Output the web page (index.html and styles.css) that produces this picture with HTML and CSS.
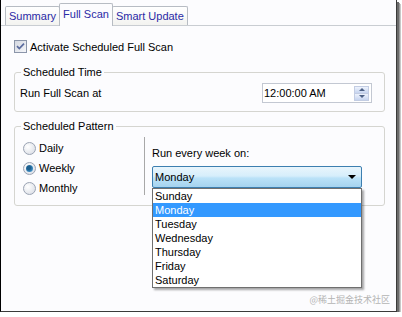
FILE: index.html
```html
<!DOCTYPE html>
<html lang="en">
<head>
    <meta charset="UTF-8">
    <meta name="viewport" content="width=device-width, initial-scale=1.0">
    <title>Full Scan</title>
    <link rel="stylesheet" href="styles.css">
</head>
<body>
    <div class="window">
        <div class="tabs">
            <span class="tab">Summary</span>
            <span class="tab active">Full Scan</span>
            <span class="tab">Smart Update</span>
        </div>

        <div class="panel">
            <div class="check-row">
                <svg class="checkbox" width="13" height="13" viewBox="0 0 13 13">
                    <defs>
                        <linearGradient id="cbfill" x1="0" y1="0" x2="1" y2="1">
                            <stop offset="0" stop-color="#d3d7e0"/>
                            <stop offset="1" stop-color="#f6f7fa"/>
                        </linearGradient>
                    </defs>
                    <rect x="0.5" y="0.5" width="12" height="12" fill="url(#cbfill)" stroke="#8b95a9"/>
                    <path d="M3 6.2 L5.3 8.6 L10 3.6" fill="none" stroke="#5a6b9e" stroke-width="1.7"/>
                </svg>
                <span>Activate Scheduled Full Scan</span>
            </div>

            <fieldset class="group time-group">
                <legend>Scheduled Time</legend>
                <div class="time-row">
                    <span>Run Full Scan at</span>
                    <div class="time-box">
                        <span class="time-value">12:00:00 AM</span>
                        <div class="spin">
                            <span class="spin-btn"><i class="tri-up"></i></span>
                            <span class="spin-btn"><i class="tri-down"></i></span>
                        </div>
                    </div>
                </div>
            </fieldset>

            <fieldset class="group pattern-group">
                <legend>Scheduled Pattern</legend>
                <div class="pattern-body">
                    <div class="radios">
                        <div class="radio-row"><span class="radio"></span>Daily</div>
                        <div class="radio-row"><span class="radio checked"></span>Weekly</div>
                        <div class="radio-row"><span class="radio"></span>Monthly</div>
                    </div>
                    <div class="separator"></div>
                    <div class="week">
                        <div class="week-label">Run every week on:</div>
                        <div class="combo">
                            <div class="combo-box">
                                <span>Monday</span>
                                <i class="combo-arrow"></i>
                            </div>
                            <ul class="combo-list">
                                <li>Sunday</li>
                                <li class="selected">Monday</li>
                                <li>Tuesday</li>
                                <li>Wednesday</li>
                                <li>Thursday</li>
                                <li>Friday</li>
                                <li>Saturday</li>
                            </ul>
                        </div>
                    </div>
                </div>
            </fieldset>
        </div>

        <div class="watermark">@稀土掘金技术社区</div>
    </div>
</body>
</html>
```

FILE: styles.css
```css
body {
    margin: 0;
    background: #ffffff;
    font-family: "Liberation Sans", Arial, sans-serif;
    font-size: 11px;
    color: #000;
}
.window {
    position: relative;
    width: 395px;
    height: 311px;
    background: #fcfcfe;
    border-left: 1px solid #000;
    border-right: 1px solid #3a3a3a;
    border-bottom: 1px solid #3a3a3a;
    box-shadow: 2px 2px 0 #6a6a6a, 3px 3px 0 #9a9a9a, 4px 4px 0 #c8c8c8;
}
.tabs {
    display: flex;
    align-items: flex-end;
    height: 25px;
    padding-left: 4px;
    border-bottom: 1px solid #c9cdd2;
}
.tab {
    box-sizing: border-box;
    height: 19px;
    line-height: 18px;
    padding: 0 3px;
    border: 1px solid #b7bcc3;
    border-bottom: none;
    border-radius: 2px 2px 0 0;
    background: linear-gradient(#ffffff, #f3f3f0);
    color: #2a2aa6;
    margin-right: -1px;
}
.tab.active {
    height: 23px;
    line-height: 20px;
    margin-bottom: -1px;
    background: #fcfcfe;
    position: relative;
}
.panel {
    padding-left: 13px;
}
.check-row {
    display: flex;
    align-items: center;
    gap: 3px;
    height: 13px;
    margin-top: 14px;
}
.checkbox {
    display: block;
}
.group {
    box-sizing: border-box;
    width: 371px;
    margin: 0;
    padding: 0;
    border: 1px solid #d5d5d0;
    border-radius: 3px;
}
.group legend {
    margin-left: 6px;
    padding: 0 2px;
    line-height: 13px;
}
.time-group {
    margin-top: 13px;
}
.time-row {
    display: flex;
    align-items: center;
    justify-content: space-between;
    padding: 4px 12px 8px 5px;
}
.time-box {
    box-sizing: border-box;
    display: flex;
    align-items: center;
    justify-content: space-between;
    width: 110px;
    height: 20px;
    border: 1px solid #c3c8d2;
    background: #fff;
    padding: 0 2px 0 1px;
}
.spin {
    display: flex;
    flex-direction: column;
    width: 15px;
}
.spin-btn {
    box-sizing: border-box;
    display: flex;
    align-items: center;
    justify-content: center;
    height: 8px;
    border: 1px solid #c3cde3;
    background: linear-gradient(#eef3fd, #c6d4ef);
}
.spin-btn + .spin-btn {
    margin-top: -1px;
}
.tri-up, .tri-down {
    width: 0;
    height: 0;
    border-left: 3px solid transparent;
    border-right: 3px solid transparent;
}
.tri-up {
    border-bottom: 3px solid #4d6185;
}
.tri-down {
    border-top: 3px solid #4d6185;
}
.pattern-group {
    margin-top: 8px;
}
.pattern-body {
    display: flex;
    padding: 4px 0 7px 0;
}
.radios {
    width: 121px;
    padding: 1px 0 0 8px;
}
.radio-row {
    display: flex;
    align-items: center;
    gap: 3px;
    height: 20px;
}
.radio {
    box-sizing: border-box;
    width: 13px;
    height: 13px;
    border-radius: 50%;
    border: 1px solid #9aa3b3;
    background: radial-gradient(circle at 35% 35%, #ffffff, #d5d9e2);
    position: relative;
}
.radio.checked::after {
    content: "";
    position: absolute;
    left: 2px;
    top: 2px;
    width: 7px;
    height: 7px;
    border-radius: 50%;
    background: radial-gradient(circle at 40% 40%, #1d5f8e 30%, #3f8fc6 70%, #8cc6ea);
}
.separator {
    width: 1px;
    height: 58px;
    background: #a8a8a8;
}
.week {
    padding: 10px 0 0 7px;
}
.week-label {
    line-height: 13px;
}
.combo {
    position: relative;
    margin-top: 6px;
    width: 210px;
}
.combo-box {
    box-sizing: border-box;
    display: flex;
    align-items: center;
    justify-content: space-between;
    height: 22px;
    padding: 0 5px 0 2px;
    border: 1px solid #3d7fb0;
    border-radius: 2px;
    background: linear-gradient(#e9f5fc 0%, #d6eefb 45%, #bbe2f8 55%, #a5d3ef 100%);
}
.combo-arrow {
    width: 0;
    height: 0;
    border-left: 4px solid transparent;
    border-right: 4px solid transparent;
    border-top: 4px solid #000;
}
.combo-list {
    position: absolute;
    top: 100%;
    left: 0;
    box-sizing: border-box;
    width: 210px;
    margin: 0;
    padding: 0;
    list-style: none;
    background: #fff;
    border: 1px solid #6f6f6f;
    box-shadow: 2px 2px 2px rgba(0, 0, 0, 0.35);
    z-index: 2;
}
.combo-list li {
    height: 14px;
    line-height: 14px;
    padding-left: 2px;
}
.combo-list li.selected {
    background: #3399ff;
    color: #fff;
}
.watermark {
    position: absolute;
    right: 6px;
    bottom: 5px;
    font-family: "Noto Sans CJK SC", sans-serif;
    font-size: 9px;
    color: #b4b4b4;
}
```
